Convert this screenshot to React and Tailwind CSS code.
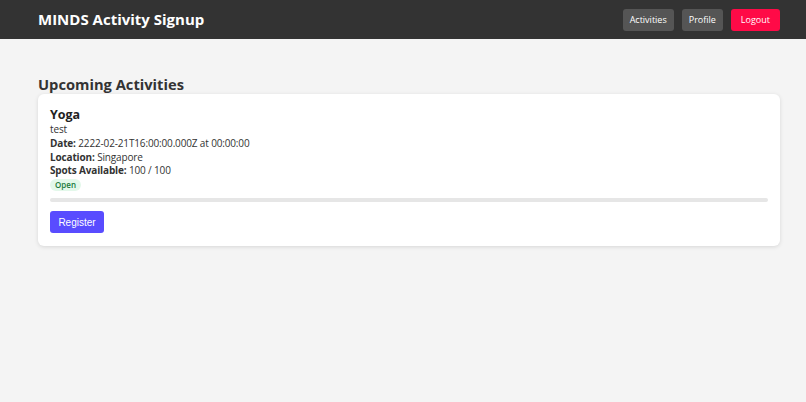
import React from 'react';

const activities = [
  {
    id: 1,
    name: 'Yoga',
    description: 'test',
    date: '2222-02-21T16:00:00.000Z',
    time: '00:00:00',
    location: 'Singapore',
    spots: 100,
    capacity: 100,
    status: 'Open',
  },
];

const ActivityCard = ({ activity }) => {
  const filled = ((activity.capacity - activity.spots) / activity.capacity) * 100;
  return (
    <div className="bg-white rounded-md shadow-[0_1px_4px_rgba(0,0,0,0.12)] px-3 pt-[13px] pb-[13px]">
      <h3 className="text-[12.5px] font-bold leading-[16px] text-[#222]">{activity.name}</h3>
      <div className="text-[10px] leading-[13.8px] text-[#333] tracking-[-0.15px]">
        <p>{activity.description}</p>
        <p>
          <span className="font-bold">Date:</span> {activity.date} at {activity.time}
        </p>
        <p>
          <span className="font-bold">Location:</span> {activity.location}
        </p>
        <p>
          <span className="font-bold">Spots Available:</span> {activity.spots} / {activity.capacity}
        </p>
      </div>
      <div className="mt-[1px] w-fit px-[5px] py-[1px] rounded-full bg-[#e3f8ea] text-[#1a7a3c] text-[8px] font-semibold leading-[10px]">
        {activity.status}
      </div>
      <div className="mt-[7px] h-[4px] rounded-full bg-[#e6e6e6] overflow-hidden">
        <div className="h-full bg-[#5a4bff]" style={{ width: `${filled}%` }} />
      </div>
      <button
        className="block mt-[9px] w-[54px] h-[22px] rounded-[3px] bg-[#594cff] text-white text-[10px]"
        style={{ fontFamily: '"Liberation Sans", Arial, sans-serif' }}
      >
        Register
      </button>
    </div>
  );
};

export default function App() {
  return (
    <div
      className="min-h-[402px] bg-[#f4f4f4]"
      style={{ fontFamily: '"Open Sans", "Noto Sans", sans-serif' }}
    >
      <header className="h-[39px] bg-[#333333] flex items-center justify-between pl-[38px] pr-[26px]">
        <h1 className="text-white text-[15px] font-bold">MINDS Activity Signup</h1>
        <nav className="flex gap-[8px]">
          <button className="h-[22px] px-[7px] rounded-[3px] bg-[#555555] text-white text-[9px]">Activities</button>
          <button className="h-[22px] px-[7px] rounded-[3px] bg-[#555555] text-white text-[9px]">Profile</button>
          <button className="h-[22px] px-[10px] rounded-[3px] bg-[#ff0a47] text-white text-[9px]">Logout</button>
        </nav>
      </header>
      <main className="px-[38px] pr-[26px] pt-[35px]">
        <h2 className="text-[14.7px] font-bold text-[#333] leading-[20px] mb-0">Upcoming Activities</h2>
        <div className="flex flex-col gap-3">
          {activities.map((a) => (
            <ActivityCard key={a.id} activity={a} />
          ))}
        </div>
      </main>
    </div>
  );
}
